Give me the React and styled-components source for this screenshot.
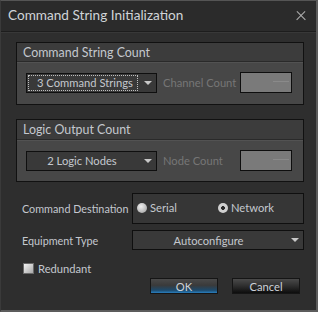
import { createGlobalStyle, styled } from 'styled-components';

const GlobalStyle = createGlobalStyle`
  html, body {
    margin: 0;
    padding: 0;
    background: #2d2d2d;
  }
  * {
    box-sizing: border-box;
  }
`;

const Window = styled.div`
  width: 318px;
  height: 312px;
  display: flex;
  flex-direction: column;
  background: #2e2e2e;
  border-top: 1px solid #555555;
  border-right: 2px solid #5c5c5c;
  border-bottom: 2px solid #5c5c5c;
  border-left: 1px solid #3a3a3a;
  font-family: Lato, "Liberation Sans", sans-serif;
  color: #c4c8ce;
  font-size: 11px;
  white-space: nowrap;
  overflow: hidden;
`;

const TitleBar = styled.div`
  height: 31px;
  flex-shrink: 0;
  display: flex;
  align-items: center;
  justify-content: space-between;
  padding: 0 10px 0 7px;
  background: #2b2b2b;
  border-bottom: 1px solid #1d1d1d;
  box-shadow: 0 1px 0 #383838;
`;

const Title = styled.div`
  font-size: 13.6px;
  color: #d0d4d8;
  padding-bottom: 2px;
`;

const Close = styled.div`
  width: 10px;
  height: 10px;
  position: relative;
  &::before,
  &::after {
    content: '';
    position: absolute;
    left: -1px;
    top: 4px;
    width: 12px;
    height: 1.4px;
    background: #b0b0b0;
    transform: rotate(45deg);
  }
  &::after {
    transform: rotate(-45deg);
  }
`;

const Content = styled.div`
  flex: 1;
  display: flex;
  flex-direction: column;
  padding: 10px 12px 0 15px;
`;

const Group = styled.div`
  border: 1px solid #111111;
  background: #474747;
  margin-bottom: ${p => p.$gap || 0}px;
`;

const GroupHeader = styled.div`
  height: ${p => p.$h}px;
  display: flex;
  align-items: center;
  padding-left: 6px;
  background: #3c3c3c;
  border-bottom: 1px solid #2a2a2a;
  box-shadow: 0 1px 0 #525252;
  font-size: 12.4px;
  color: #c4c8ce;
`;

const GroupBody = styled.div`
  display: flex;
  align-items: center;
  padding: ${p => p.$pt}px 11px ${p => p.$pb}px 9px;
`;

const Select = styled.div`
  width: ${p => p.$w}px;
  height: ${p => p.$h || 20}px;
  display: flex;
  align-items: center;
  background: #393939;
  border: 1px solid #0f0f0f;
  padding: 1px;
  flex-shrink: 0;
`;

const SelectText = styled.div`
  flex: 1;
  min-width: 0;
  overflow: hidden;
  height: 100%;
  display: flex;
  align-items: center;
  justify-content: ${p => (p.$focus ? 'flex-start' : 'center')};
  padding-left: ${p => (p.$focus ? 9 : 0)}px;
  padding-right: ${p => (p.$focus ? 0 : 8)}px;
  margin-right: ${p => (p.$focus ? 6 : 0)}px;
  outline: ${p => (p.$focus ? '1px dotted #bfbfbf' : 'none')};
  outline-offset: -1px;
  font-size: 11.2px;
  color: #c4c8ce;
`;

const Arrow = styled.div`
  width: 0;
  height: 0;
  margin-right: 3px;
  border-left: 4px solid transparent;
  border-right: 4px solid transparent;
  border-top: 4px solid #c8c8c8;
`;

const Disabled = styled.div`
  flex: 1;
  padding-left: 6px;
  color: #767676;
  font-size: 11.2px;
`;

const Spin = styled.div`
  width: 52px;
  height: 21px;
  flex-shrink: 0;
  background: #7a7a7a;
  border: 1px solid #0e0e0e;
  position: relative;
  &::before {
    content: '';
    position: absolute;
    right: 2px;
    top: 8px;
    width: 16px;
    height: 1px;
    background: #8a8a8a;
  }
`;

const Row = styled.div`
  display: flex;
  align-items: center;
  margin-top: ${p => p.$mt || 0}px;
`;

const Label = styled.div`
  width: 116px;
  flex-shrink: 0;
  padding-left: 6px;
  font-size: 10.8px;
  color: #c4c8ce;
`;

const RadioBox = styled.div`
  width: 172px;
  height: 31px;
  display: flex;
  align-items: center;
  border: 1px solid #0f0f0f;
  background: #363636;
  padding-left: 4px;
  padding-bottom: 2px;
`;

const Radio = styled.div`
  display: flex;
  align-items: center;
  gap: 3px;
  width: ${p => p.$w}px;
  font-size: 11.2px;
  color: #c4c8ce;
`;

const Dot = styled.div`
  width: 10px;
  height: 10px;
  border-radius: 50%;
  background: ${p =>
    p.$on
      ? 'radial-gradient(circle, #2a2a2a 0 1.6px, #d0d0d0 2.2px)'
      : 'radial-gradient(circle at 40% 35%, #f0f0f0, #9a9a9a)'};
`;

const CheckRow = styled.div`
  height: 11px;
  display: flex;
  align-items: center;
  gap: 4px;
  margin-top: 13px;
  padding-left: 7px;
  font-size: 11.2px;
  color: #c4c8ce;
`;

const Box = styled.div`
  width: 11px;
  height: 11px;
  border: 1px solid #6a6a6a;
  background: linear-gradient(135deg, #f4f4f4, #a8a8a8);
`;

const Buttons = styled.div`
  display: flex;
  justify-content: flex-end;
  gap: 14px;
  margin-top: 4px;
  padding-right: 4px;
`;

const Button = styled.div`
  width: 68px;
  height: 16px;
  display: flex;
  align-items: center;
  justify-content: center;
  font-size: 11.2px;
  color: #cdd2d8;
  border: 1px solid #151515;
  background: ${p =>
    p.$primary
      ? 'linear-gradient(#4a4a4a 0%, #3a3a3a 45%, #1d4a6c 80%, #2a7fbf 100%)'
      : 'linear-gradient(#4a4a4a 0%, #2e2e2e 50%, #0d0d0d 100%)'};
`;

export default function App() {
  return (
    <>
      <GlobalStyle />
      <Window>
        <TitleBar>
          <Title>Command String Initialization</Title>
          <Close />
        </TitleBar>
        <Content>
          <Group $gap={14}>
            <GroupHeader $h={19}>Command String Count</GroupHeader>
            <GroupBody $pt={10} $pb={11}>
              <Select $w={131}>
                <SelectText $focus>3 Command Strings</SelectText>
                <Arrow />
              </Select>
              <Disabled>Channel Count</Disabled>
              <Spin />
            </GroupBody>
          </Group>
          <Group>
            <GroupHeader $h={20}>Logic Output Count</GroupHeader>
            <GroupBody $pt={10} $pb={10}>
              <Select $w={131}>
                <SelectText>2 Logic Nodes</SelectText>
                <Arrow />
              </Select>
              <Disabled>Node Count</Disabled>
              <Spin />
            </GroupBody>
          </Group>
          <Row $mt={11}>
            <Label>Command Destination</Label>
            <RadioBox>
              <Radio $w={81}>
                <Dot />
                Serial
              </Radio>
              <Radio>
                <Dot $on />
                Network
              </Radio>
            </RadioBox>
          </Row>
          <Row $mt={6}>
            <Label>Equipment Type</Label>
            <Select $w={172} $h={20}>
              <SelectText>Autoconfigure</SelectText>
              <Arrow />
            </Select>
          </Row>
          <CheckRow>
            <Box />
            Redundant
          </CheckRow>
          <Buttons>
            <Button $primary>OK</Button>
            <Button>Cancel</Button>
          </Buttons>
        </Content>
      </Window>
    </>
  );
}
